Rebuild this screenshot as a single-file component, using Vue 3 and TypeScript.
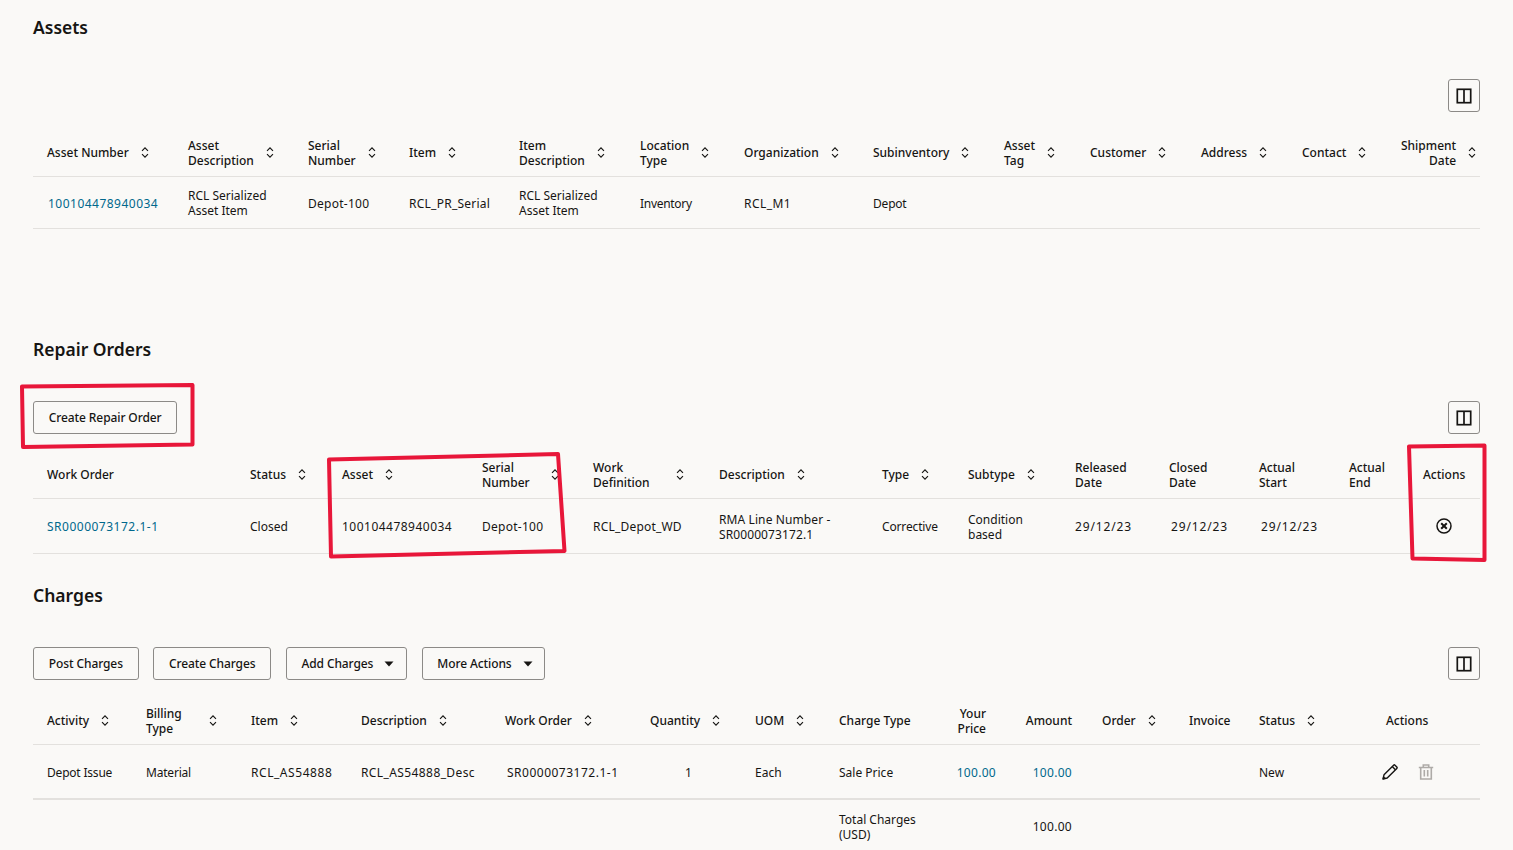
<script setup lang="ts">
interface Col {
  w: number
  label: string
  sort?: boolean
  right?: boolean
  labelW?: number
  headRight?: number
  cellPad?: number
  cellRight?: number
}
interface Cell {
  text?: string
  link?: boolean
  ls?: number
  icon?: 'cancel' | 'edit'
}
interface Section {
  title: string
  gap: number
  rowClass: string
  buttons: { label: string; menu?: boolean }[]
  cols: Col[]
  row: Cell[]
  footer?: boolean
}

const sections: Section[] = [
  {
    title: 'Assets',
    gap: 0,
    rowClass: 'row-a',
    buttons: [],
    cols: [
      { w: 141, label: 'Asset Number', sort: true, cellPad: 15 },
      { w: 120, label: 'Asset\nDescription', sort: true },
      { w: 101, label: 'Serial\nNumber', sort: true },
      { w: 110, label: 'Item', sort: true },
      { w: 121, label: 'Item\nDescription', sort: true },
      { w: 104, label: 'Location\nType', sort: true },
      { w: 129, label: 'Organization', sort: true },
      { w: 131, label: 'Subinventory', sort: true },
      { w: 86, label: 'Asset\nTag', sort: true },
      { w: 111, label: 'Customer', sort: true },
      { w: 101, label: 'Address', sort: true },
      { w: 99, label: 'Contact', sort: true },
      { w: 93, label: 'Shipment\nDate', sort: true, right: true },
    ],
    row: [
      { text: '100104478940034', link: true, ls: 0.48 },
      { text: 'RCL Serialized\nAsset Item' },
      { text: 'Depot-100', ls: 0.27 },
      { text: 'RCL_PR_Serial', ls: 0.25 },
      { text: 'RCL Serialized\nAsset Item' },
      { text: 'Inventory', ls: -0.3 },
      { text: 'RCL_M1', ls: 0.45 },
      { text: 'Depot', ls: -0.2 },
      {}, {}, {}, {}, {},
    ],
  },
  {
    title: 'Repair Orders',
    gap: 108,
    rowClass: 'row-b',
    buttons: [{ label: 'Create Repair Order' }],
    cols: [
      { w: 203, label: 'Work Order' },
      { w: 92, label: 'Status', sort: true },
      { w: 140, label: 'Asset', sort: true },
      { w: 111, label: 'Serial\nNumber', sort: true, labelW: 57 },
      { w: 126, label: 'Work\nDefinition', sort: true, labelW: 71 },
      { w: 163, label: 'Description', sort: true },
      { w: 86, label: 'Type', sort: true },
      { w: 107, label: 'Subtype', sort: true },
      { w: 94, label: 'Released\nDate' },
      { w: 90, label: 'Closed\nDate', cellPad: 16 },
      { w: 90, label: 'Actual\nStart', cellPad: 16 },
      { w: 74, label: 'Actual\nEnd' },
      { w: 71, label: 'Actions' },
    ],
    row: [
      { text: 'SR0000073172.1-1', link: true, ls: 0.5 },
      { text: 'Closed' },
      { text: '100104478940034', ls: 0.48 },
      { text: 'Depot-100', ls: 0.27 },
      { text: 'RCL_Depot_WD', ls: 0.2 },
      { text: 'RMA Line Number -\nSR0000073172.1', ls: 0.1 },
      { text: 'Corrective', ls: -0.15 },
      { text: 'Condition\nbased' },
      { text: '29/12/23', ls: 0.85 },
      { text: '29/12/23', ls: 0.85 },
      { text: '29/12/23', ls: 0.85 },
      {},
      { icon: 'cancel' },
    ],
  },
  {
    title: 'Charges',
    gap: 29,
    rowClass: 'row-c',
    buttons: [
      { label: 'Post Charges' },
      { label: 'Create Charges' },
      { label: 'Add Charges', menu: true },
      { label: 'More Actions', menu: true },
    ],
    cols: [
      { w: 99, label: 'Activity', sort: true },
      { w: 105, label: 'Billing\nType', sort: true, labelW: 51 },
      { w: 110, label: 'Item', sort: true },
      { w: 144, label: 'Description', sort: true },
      { w: 145, label: 'Work Order', sort: true, cellPad: 16 },
      { w: 105, label: 'Quantity', sort: true, cellPad: 49 },
      { w: 84, label: 'UOM', sort: true },
      { w: 105, label: 'Charge Type' },
      { w: 70, label: 'Your\nPrice', right: true, headRight: 14, cellRight: 4 },
      { w: 88, label: 'Amount', right: true, headRight: 16, cellRight: 16 },
      { w: 87, label: 'Order', sort: true },
      { w: 70, label: 'Invoice' },
      { w: 127, label: 'Status', sort: true },
      { w: 108, label: 'Actions' },
    ],
    row: [
      { text: 'Depot Issue', ls: -0.2 },
      { text: 'Material', ls: -0.2 },
      { text: 'RCL_AS54888', ls: 0.55 },
      { text: 'RCL_AS54888_Desc', ls: 0.4 },
      { text: 'SR0000073172.1-1', ls: 0.5 },
      { text: '1' },
      { text: 'Each' },
      { text: 'Sale Price' },
      { text: '100.00', link: true, ls: 0.3 },
      { text: '100.00', link: true, ls: 0.3 },
      {},
      {},
      { text: 'New' },
      { icon: 'edit' },
    ],
    footer: true,
  },
]

function cellStyle(col: Col) {
  return {
    paddingLeft: col.cellPad ? `${col.cellPad}px` : undefined,
    paddingRight: col.cellRight ? `${col.cellRight}px` : undefined,
  }
}
function textStyle(cell: Cell) {
  return { letterSpacing: cell.ls ? `${cell.ls}px` : undefined }
}
</script>

<template>
  <main class="page">
    <section
      v-for="s in sections"
      :key="s.title"
      class="section"
      :style="{ marginTop: `${s.gap}px` }"
    >
      <h2 class="title">{{ s.title }}</h2>
      <div class="toolbar">
        <div class="actions">
          <button v-for="b in s.buttons" :key="b.label" class="btn" type="button">
            {{ b.label }}
            <svg v-if="b.menu" class="caret" viewBox="0 0 10 6" width="10" height="6">
              <path d="M0.5 0.5h9L5 5.5z" fill="#161513" />
            </svg>
          </button>
        </div>
        <button class="btn icon-btn" type="button" aria-label="Columns">
          <svg viewBox="0 0 16 16" width="16" height="16" fill="none" stroke="#161513" stroke-width="1.7">
            <rect x="1.3" y="1.3" width="13.4" height="13.4" />
            <path d="M8 2v12" />
          </svg>
        </button>
      </div>
      <table class="table">
        <colgroup>
          <col v-for="(c, i) in s.cols" :key="i" :style="{ width: `${c.w}px` }" />
        </colgroup>
        <thead>
          <tr>
            <th v-for="(c, i) in s.cols" :key="i" :style="{ paddingRight: c.headRight ? `${c.headRight}px` : undefined }">
              <div class="head" :class="{ end: c.headRight }">
                <span
                  class="label"
                  :class="{ right: c.right }"
                  :style="{ minWidth: c.labelW ? `${c.labelW}px` : undefined }"
                >{{ c.label }}</span>
                <svg v-if="c.sort" class="sort" viewBox="0 0 10 14" width="10" height="13" fill="none" stroke="#161513" stroke-width="1.200">
                  <path d="M1.800 5.300 5 2 8.200 5.300M1.800 8.700 5 12 8.200 8.700" />
                </svg>
              </div>
            </th>
          </tr>
        </thead>
        <tbody>
          <tr :class="s.rowClass">
            <td
              v-for="(cell, i) in s.row"
              :key="i"
              :class="{ right: s.cols[i].right }"
              :style="cellStyle(s.cols[i])"
            >
              <a v-if="cell.link" class="link" :style="textStyle(cell)">{{ cell.text }}</a>
              <span v-else-if="cell.text" class="text" :style="textStyle(cell)">{{ cell.text }}</span>
              <div v-else-if="cell.icon === 'cancel'" class="cancel-wrap">
                <svg viewBox="0 0 16 16" width="16" height="16" fill="none" stroke="#161513" stroke-width="1.500">
                  <circle cx="8" cy="8" r="7" />
                  <path d="M5.200 5.200l5.600 5.600M10.800 5.200l-5.600 5.600" stroke-width="2" />
                </svg>
              </div>
              <div v-else-if="cell.icon === 'edit'" class="edit-wrap">
                <svg viewBox="0 0 16 16" width="16" height="16" fill="none" stroke="#161513" stroke-width="1.400">
                  <path d="M1 15l1-4.200L11.600 1.200a1 1 0 0 1 1.400 0l1.800 1.800a1 1 0 0 1 0 1.400L5.200 14z" stroke-linejoin="round" />
                  <path d="M10.200 2.600l3.200 3.200" />
                  <path d="M1 15l.6-2.500 1.900 1.900z" fill="#161513" stroke-width="0.800" />
                </svg>
                <svg viewBox="0 0 16 16" width="16" height="16" fill="none" stroke="#aeaba8" stroke-width="1.600">
                  <path d="M.8 3.500h14.400M5.300 3.500V1h5.400v2.500M2.700 3.500V15h10.600V3.500M6.300 6v6.500M9.700 6v6.500" />
                </svg>
              </div>
            </td>
          </tr>
          <tr v-if="s.footer" class="row-total">
            <td :colspan="7"></td>
            <td class="total-label">Total Charges<br />(USD)</td>
            <td></td>
            <td class="right total-amount">100.00</td>
            <td :colspan="4"></td>
          </tr>
        </tbody>
      </table>
    </section>

    <svg class="marks" viewBox="0 0 1513 850" width="1513" height="850" fill="none" stroke="#e8173a" stroke-width="4" stroke-linejoin="round">
      <path d="M22 386.500 192.500 385 192.500 444.500 23 447z" />
      <path d="M329 459.500 558 454 564.500 551 331 556.500z" />
      <path d="M1409 446.500 1484.500 445.500 1484.500 560 1412.500 558.500z" />
    </svg>
  </main>
</template>

<style>
html, body {
  margin: 0;
  height: 850px;
  overflow: hidden;
  background: #faf9f7;
}
</style>

<style scoped>
.page {
  position: relative;
  box-sizing: border-box;
  width: 1513px;
  height: 850px;
  overflow: hidden;
  padding: 15px 33px 0;
  background: #faf9f7;
  color: #161513;
  font-family: "Noto Sans", "Liberation Sans", sans-serif;
  font-size: 12px;
}
.title {
  margin: 0;
  font-size: 17.500px;
  line-height: 24px;
  font-weight: 600;
}
.toolbar {
  display: flex;
  justify-content: space-between;
  align-items: center;
  margin-top: 40px;
  height: 33px;
}
.actions {
  display: flex;
  gap: 14.500px;
}
.btn {
  box-sizing: border-box;
  display: inline-flex;
  align-items: center;
  height: 33px;
  padding: 0 14.750px;
  border: 1px solid #8c8a87;
  border-radius: 3px;
  background: transparent;
  color: #161513;
  font: inherit;
  font-weight: 500;
  letter-spacing: -0.1px;
}
.caret {
  margin-left: 11px;
  margin-right: -3px;
}
.icon-btn {
  width: 32px;
  padding: 0;
  justify-content: center;
}
.table {
  margin-top: 16px;
  width: 1447px;
  table-layout: fixed;
  border-collapse: collapse;
}
th {
  height: 47px;
  padding: 1px 0 0 14px;
  text-align: left;
  font-weight: 500;
  line-height: 15px;
  border-bottom: 1px solid #e3e1de;
}
.head {
  display: flex;
  align-items: center;
  gap: 11px;
}
.head.end {
  justify-content: flex-end;
}
.label {
  white-space: pre-line;
}
.label.right {
  text-align: right;
}
.sort {
  flex: none;
  margin-top: -1px;
}
td {
  padding: 1px 0 0 14px;
  line-height: 15px;
  border-bottom: 1px solid #e3e1de;
}
td.right {
  text-align: right;
}
.text {
  white-space: pre-line;
}
.link {
  color: #00688c;
}
.row-a td { height: 50px; }
.row-b td { height: 53px; }
.row-c td { height: 52px; border-bottom-width: 2px; }
.row-total td {
  height: 51px;
  border-bottom: 0;
}
.total-amount {
  padding-right: 16px;
  letter-spacing: 0.3px;
}
.cancel-wrap {
  display: flex;
  margin-top: -1px;
  padding-left: 13px;
}
.edit-wrap {
  display: flex;
  margin-top: -1px;
  gap: 20px;
  margin-left: -4px;
}
.marks {
  position: absolute;
  left: 0;
  top: 0;
  pointer-events: none;
}
</style>
